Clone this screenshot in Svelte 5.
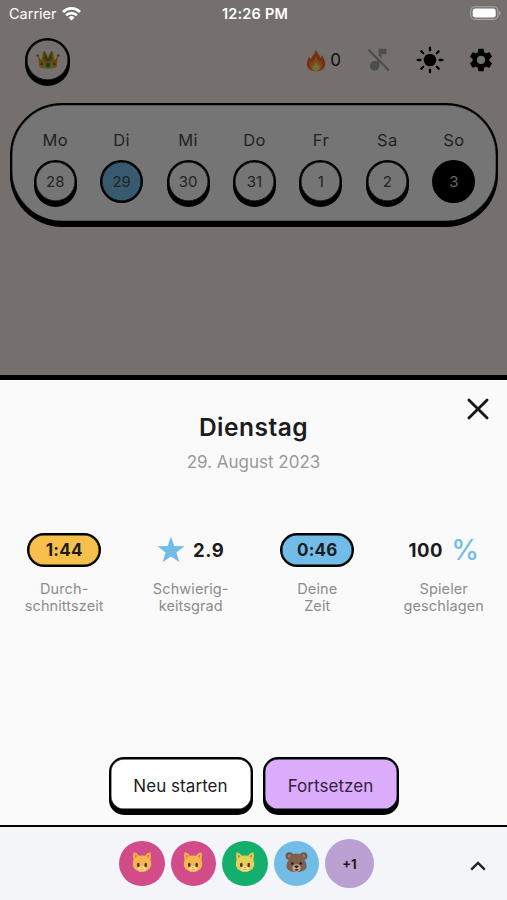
<script lang="ts">
    type Day = { name: string; date: number; state?: string };

    const days: Day[] = [
        { name: 'Mo', date: 28 },
        { name: 'Di', date: 29, state: 'selected' },
        { name: 'Mi', date: 30 },
        { name: 'Do', date: 31 },
        { name: 'Fr', date: 1 },
        { name: 'Sa', date: 2 },
        { name: 'So', date: 3, state: 'today' },
    ];

    const players = [
        { color: 'pink', animal: 'cat' },
        { color: 'pink', animal: 'cat' },
        { color: 'green', animal: 'cat' },
        { color: 'blue', animal: 'bear' },
    ];

    const rays = [0, 45, 90, 135, 180, 225, 270, 315];
</script>

<div class="app">
    <div class="game">
        <header class="status">
            <div class="carrier">
                <span>Carrier</span>
                <svg width="19" height="14" viewBox="0 0 19 14" fill="none" stroke="#fff" stroke-width="2.8">
                    <path d="M1 4.9a12.2 12.2 0 0 1 17 0" />
                    <path d="M4.1 8.2a7.8 7.8 0 0 1 10.8 0" />
                    <path d="M9.5 13.6 6.5 10.5a4.3 4.3 0 0 1 6 0z" fill="#fff" stroke="none" />
                </svg>
            </div>
            <b>12:26 PM</b>
            <svg class="battery" width="31" height="15" viewBox="0 0 31 15">
                <rect x=".8" y=".8" width="27" height="12.6" rx="4" fill="none" stroke="#aaa7a4" stroke-width="1.1" />
                <rect x="2.7" y="2.6" width="23" height="9" rx="2.4" fill="#fff" />
                <path d="M29 5v4.4q1.5-.6 1.5-2.2T29 5z" fill="#aaa7a4" />
            </svg>
        </header>

        <nav class="toolbar">
            <button class="round crown" aria-label="Bestenliste">
                <svg width="24" height="20" viewBox="0 0 24 20">
                    <path d="M2 6 3.500 17q8.500 3 17 0L22 6l-3.500 4.500L17 2l-1.800-1-3.200 6.500L8.800 1 7 2 5.500 10.500z" fill="#c9a31f" />
                    <path d="M8.800 2 8 9l4 3 4-3-.8-7L12 8.500z" fill="#8d781c" />
                    <path d="M3.200 12.500q8.800 3.500 17.600 0l-.5 4.700q-8.300 2.800-16.600 0z" fill="#dcb82c" />
                    <circle cx="1.700" cy="5.500" r="1.300" fill="#d4594c" />
                    <circle cx="22.300" cy="5.500" r="1.300" fill="#d4594c" />
                    <circle cx="12" cy="15" r="2.300" fill="#168c67" />
                    <circle cx="5.500" cy="14" r="1.500" fill="#c94e3b" />
                    <circle cx="18.500" cy="14" r="1.500" fill="#c94e3b" />
                </svg>
            </button>
            <div class="tools">
                <div class="streak">
                    <svg width="20" height="24" viewBox="0 0 20 24">
                        <path d="M9.600 1c1 4 4.400 5.500 4.800 9.200L16.200 7c1 3 3 5 3 9 0 4.200-3.700 7.300-9.200 7.300S.8 20.200.8 16c0-3.200 1.400-5 2.200-7.500l1.800 3C5.500 7.500 9.800 6 9.600 1z" fill="#ff6a2b" />
                        <path d="M10 8c.2 3 3 4 3.500 6.500L15 13c2.500 5 .8 10-5 10S2.500 18 5 13.500l1.400 2C6.500 12.500 10 11.500 10 8z" fill="#ffa63c" />
                        <path d="M10 14c.3 2 2 2.500 2.400 4l1-1c1 3.500-.4 6-3.400 6s-4.600-2.500-3.400-5.500l1 .9C7.800 16.700 10 16 10 14z" fill="#fff078" />
                    </svg>
                    <span>0</span>
                </div>
                <svg class="music" width="24" height="24" viewBox="0 0 24 24" fill="#a5a5a5">
                    <circle cx="7.600" cy="17.800" r="4.800" />
                    <path d="M11.600 .8h7.800v5.400h-4.800v4.200l-3-3zM12.400 13.500V18H9.600v-5l1.200-1.200z" />
                    <path d="M1.400 1.800 22 22.500" stroke="#a5a5a5" stroke-width="2.300" />
                </svg>
                <svg class="sun" width="28" height="28" viewBox="-14 -14 28 28">
                    <circle r="6.300" />
                    {#each rays as angle}
                        <path d="M0-9.600v-2.700" stroke="#000" stroke-width="2.300" stroke-linecap="round" transform="rotate({angle})" />
                    {/each}
                </svg>
                <svg width="28" height="28" viewBox="0 0 24 24">
                    <path d="M19.140 12.940c.04-.3.060-.61.060-.94 0-.32-.02-.64-.07-.94l2.030-1.580c.18-.14.230-.41.120-.61l-1.920-3.320c-.12-.22-.37-.29-.59-.22l-2.390.96c-.5-.38-1.030-.7-1.620-.94l-.36-2.540c-.04-.24-.24-.41-.48-.41h-3.840c-.24 0-.43.17-.47.41l-.36 2.540c-.59.24-1.130.57-1.620.94l-2.390-.96c-.22-.08-.47 0-.59.22L2.740 8.870c-.12.21-.08.47.12.61l2.030 1.580c-.05.3-.09.63-.09.94s.02.640.070.940l-2.030 1.580c-.18.140-.23.410-.12.610l1.920 3.320c.12.220.37.290.59.220l2.390-.96c.5.380 1.030.7 1.620.94l.36 2.540c.05.240.24.410.48.410h3.840c.24 0 .44-.17.470-.41l.36-2.540c.59-.24 1.130-.56 1.620-.94l2.390.96c.22.080.47 0 .59-.22l1.920-3.320c.12-.22.070-.47-.12-.61l-2.010-1.580zM12 15.600c-1.980 0-3.600-1.620-3.600-3.600s1.620-3.600 3.600-3.600 3.600 1.620 3.600 3.600-1.620 3.600-3.600 3.600z" />
                </svg>
            </div>
        </nav>

        <section class="week">
            {#each days as day}
                <div class="day">
                    <span>{day.name}</span>
                    <button class="round {day.state ?? ''}">{day.date}</button>
                </div>
            {/each}
        </section>
        <div class="scrim"></div>
    </div>

    <main class="sheet">
        <button class="close" aria-label="Schließen">
            <svg width="24" height="24" viewBox="0 0 24 24" fill="none" stroke="#161616" stroke-width="2.800" stroke-linecap="round">
                <path d="m2.900 2.900 18.200 18.200M21.100 2.900 2.900 21.100" />
            </svg>
        </button>
        <h1>Dienstag</h1>
        <p class="date">29. August 2023</p>

        <div class="stats">
            <div class="stat">
                <div class="value"><span class="pill yellow">1:44</span></div>
                <p>Durch-<br />schnittszeit</p>
            </div>
            <div class="stat">
                <div class="value">
                    <svg width="28" height="28" viewBox="0 0 28 28">
                        <path d="m14 .6 3.300 9.400 10.300.2-8.200 6.200 3 9.900-8.400-5.900-8.400 5.900 3-9.900-8.200-6.200 10.300-.2z" fill="#72bde8" />
                    </svg>
                    <b>2.9</b>
                </div>
                <p>Schwierig-<br />keitsgrad</p>
            </div>
            <div class="stat">
                <div class="value"><span class="pill blue">0:46</span></div>
                <p>Deine<br />Zeit</p>
            </div>
            <div class="stat">
                <div class="value"><b>100</b><span class="percent">%</span></div>
                <p>Spieler<br />geschlagen</p>
            </div>
        </div>

        <div class="actions">
            <button class="restart">Neu starten</button>
            <button class="resume">Fortsetzen</button>
        </div>
    </main>

    <footer>
        <div class="players">
            {#each players as player}
                <div class="avatar {player.color}">
                    {#if player.animal === 'cat'}
                        <svg width="20" height="22" viewBox="0 0 20 22" class:lime={player.color === 'green'}>
                            <path class="fur" d="M1.500 1.300q3.200.3 5.400 3.500 3.100-.8 6.200 0 2.200-3.200 5.400-3.500.8 3-.1 7.200 1.200 3.800.7 6.500-1 3.200-4 4.600-2 1.500-5.100 1.500t-5.100-1.500q-3-1.400-4-4.600-.5-2.700.7-6.500-.9-4.200-.1-7.200z" />
                            <path d="m2.800 3.300.3 4L5.600 5zM17.200 3.300l-.3 4L14.400 5z" fill="#c9782a" opacity=".75" />
                            <ellipse cx="10" cy="17.500" rx="4.200" ry="2.500" fill="#ffdc92" />
                            <ellipse cx="6.300" cy="14" rx="1.300" ry="2.300" fill="#513214" />
                            <ellipse cx="13.700" cy="14" rx="1.300" ry="2.300" fill="#513214" />
                            <path d="M8.900 16.200h2.200L10 17.300z" fill="#c96648" />
                            <path d="M8.200 18.200q.9.900 1.800-.2.900 1.100 1.800.2" fill="none" stroke="#b98443" stroke-width=".6" />
                        </svg>
                    {:else}
                        <svg width="23" height="22" viewBox="0 0 23 22">
                            <circle cx="4.400" cy="5" r="3.800" fill="#77533f" />
                            <circle cx="18.600" cy="5" r="3.800" fill="#77533f" />
                            <circle cx="4.600" cy="5.200" r="1.900" fill="#a17a63" />
                            <circle cx="18.400" cy="5.200" r="1.900" fill="#a17a63" />
                            <path d="M11.500 2.400c5 0 7.600 3.100 8.100 7.200 1.200 1.700 2 3.400 2 5.500 0 4-4.500 6-10.100 6s-10.100-2-10.100-6c0-2.100.8-3.800 2-5.500.5-4.100 3.100-7.200 8.100-7.200z" fill="#80604b" />
                            <ellipse cx="11.500" cy="17" rx="4" ry="3.700" fill="#c9aa90" />
                            <circle cx="7.300" cy="12.500" r="1.300" fill="#251b17" />
                            <circle cx="15.700" cy="12.500" r="1.300" fill="#251b17" />
                            <path d="M9 15q2.500-1 5 0l-2.500 2.600z" fill="#20191a" />
                            <path d="M9.200 18.400q2.300 2.400 4.600 0-2.300-.9-4.600 0z" fill="#35201d" />
                        </svg>
                    {/if}
                </div>
            {/each}
            <div class="avatar more">+1</div>
        </div>
        <button class="expand" aria-label="Mehr anzeigen">
            <svg width="16" height="10" viewBox="0 0 16 10" fill="none" stroke="#222" stroke-width="2.400">
                <path d="m1.200 8.600 6.800-6.700 6.800 6.700" />
            </svg>
        </button>
    </footer>
</div>

<style>
    :global(body) {
        background: #fafafa;
    }
    .app {
        display: flex;
        flex-direction: column;
        width: 507px;
        height: 900px;
        overflow: hidden;
        font-family: Inter, "Liberation Sans", sans-serif;
        color: #1c1c1e;
    }
    .app * {
        box-sizing: border-box;
    }
    svg {
        display: block;
        flex: none;
    }
    button {
        font: inherit;
        color: inherit;
        padding: 0;
        border: none;
        background: none;
    }
    p, h1 {
        margin: 0;
    }
    .game {
        position: relative;
        height: 375px;
        background: #fef5ee;
    }
    .scrim {
        position: absolute;
        inset: 0;
        background: rgba(0, 0, 0, 0.54);
    }
    .status {
        position: relative;
        z-index: 1;
        display: grid;
        grid-template-columns: 1fr auto 1fr;
        align-items: center;
        height: 27px;
        padding: 0 6px 0 9px;
        color: #fff;
        font-size: 14.5px;
    }
    .status b {
        font-weight: 600;
        letter-spacing: 0.2px;
    }
    .carrier {
        display: flex;
        align-items: center;
        gap: 5px;
    }
    .battery {
        justify-self: end;
    }
    .toolbar {
        display: flex;
        justify-content: space-between;
        height: 76px;
        padding: 11px 12px 0 25px;
    }
    .round {
        display: flex;
        align-items: center;
        justify-content: center;
        width: 43px;
        height: 43px;
        border: 2px solid #000;
        border-radius: 50%;
        background: #fff;
        box-shadow: 0 4px #000, inset 0 0 0 0.5px #000;
    }
    .round.crown {
        width: 45px;
        height: 44px;
        background: #fef5ee;
    }
    .tools {
        display: flex;
        align-items: center;
        height: 43px;
    }
    .streak {
        display: flex;
        align-items: center;
        gap: 4px;
        font-size: 17px;
    }
    .music {
        margin: 0 25px 0 26px;
    }
    .sun {
        margin-right: 23px;
    }
    .week {
        display: grid;
        grid-template-columns: repeat(7, 1fr);
        height: 120px;
        margin: 0 9px 0 10px;
        padding: 25px 9px 0 10px;
        border: 2px solid #000;
        border-radius: 52px;
        background: #fff;
        box-shadow: 0 4px #000, inset 0 0 0 0.3px #000;
    }
    .day {
        display: flex;
        flex-direction: column;
        align-items: center;
        gap: 9px;
        font-size: 16.5px;
        line-height: 21px;
        letter-spacing: 0.4px;
        color: #4c4c4c;
    }
    .day .round {
        font-size: 15px;
    }
    .round.selected {
        background: #78c4f0;
        box-shadow: inset 0 0 0 0.5px #000;
    }
    .round.today {
        background: #000;
        color: #ddd;
        box-shadow: none;
    }
    .sheet {
        position: relative;
        height: 452px;
        border-top: 5px solid #000;
        border-bottom: 2px solid #000;
        background: #fafafa;
        text-align: center;
    }
    .close {
        position: absolute;
        top: 17px;
        right: 17px;
    }
    h1 {
        padding-top: 32px;
        font-size: 24.5px;
        line-height: 30px;
        font-weight: 600;
        letter-spacing: 0.5px;
    }
    .date {
        padding-top: 8px;
        font-size: 17px;
        line-height: 24px;
        letter-spacing: 0;
        color: #999;
    }
    .stats {
        display: grid;
        grid-template-columns: repeat(4, 1fr);
        padding: 59px 0 0 1px;
    }
    .value {
        display: flex;
        align-items: center;
        justify-content: center;
        gap: 8px;
        height: 34px;
        font-size: 18.5px;
        letter-spacing: 0.6px;
    }
    .value b {
        font-weight: 700;
    }
    .pill {
        width: 74px;
        height: 34px;
        border: 2px solid #000;
        border-radius: 17px;
        box-shadow: inset 0 0 0 0.5px #000;
        font-size: 17px;
        font-weight: 700;
        line-height: 30px;
        letter-spacing: 0.2px;
    }
    .pill.yellow {
        background: #f7c04d;
    }
    .blue {
        background: #72bde8;
    }
    .percent {
        font-size: 28px;
        font-weight: 500;
        letter-spacing: 0;
        color: #72bde8;
    }
    .stat p {
        padding-top: 13px;
        font-size: 14.5px;
        line-height: 17px;
        letter-spacing: 0.1px;
        color: #8c8c8c;
    }
    .actions {
        display: flex;
        justify-content: center;
        gap: 10px;
        padding-top: 143px;
    }
    .actions button {
        height: 54px;
        padding-top: 3px;
        border: 2px solid #000;
        border-radius: 15px;
        box-shadow: 0 4px #000, inset 0 0 0 0.4px #000;
        font-size: 17px;
        letter-spacing: 0.05px;
    }
    .restart {
        width: 144px;
        background: #fff;
    }
    .actions .resume {
        width: 136px;
        background: #dcadfc;
        color: #33203d;
    }
    footer {
        display: grid;
        grid-template-columns: 119px 1fr auto;
        height: 73px;
        padding-right: 21px;
        background: #f3f5f8;
    }
    .players {
        grid-column: 2;
        display: flex;
        align-items: center;
        gap: 6px;
    }
    .avatar {
        display: flex;
        align-items: center;
        justify-content: center;
        width: 45.5px;
        height: 45.5px;
        border-radius: 50%;
    }
    .avatar svg {
        margin-top: -3px;
    }
    .pink {
        background: #d24c8a;
    }
    .green {
        background: #14af6d;
    }
    .fur {
        fill: #f7b552;
    }
    .lime .fur {
        fill: #e6cf57;
    }
    .more {
        width: 49px;
        height: 49px;
        background: #bba0d3;
        font-size: 13px;
        font-weight: 700;
    }
    .expand {
        padding-top: 5px;
    }
</style>
